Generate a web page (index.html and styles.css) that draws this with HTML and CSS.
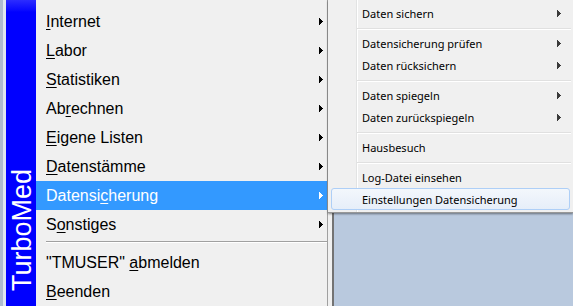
FILE: index.html
```html
<!DOCTYPE html>
<html lang="de">
<head>
<meta charset="utf-8">
<title>TurboMed Menü</title>
<link rel="stylesheet" href="styles.css">
</head>
<body>
<div class="screen">
  <div class="edge"></div>
  <div class="menu">
    <div class="brand"><span class="brand-text">TurboMed</span></div>
    <ul class="items">
      <li class="item"><span><u>I</u>nternet</span><svg class="arrow" viewBox="0 0 4 7"><rect x="0" y="0" width="1" height="7"/><rect x="1" y="1" width="1" height="5"/><rect x="2" y="2" width="1" height="3"/><rect x="3" y="3" width="1" height="1"/></svg></li>
      <li class="item"><span><u>L</u>abor</span><svg class="arrow" viewBox="0 0 4 7"><rect x="0" y="0" width="1" height="7"/><rect x="1" y="1" width="1" height="5"/><rect x="2" y="2" width="1" height="3"/><rect x="3" y="3" width="1" height="1"/></svg></li>
      <li class="item"><span><u>S</u>tatistiken</span><svg class="arrow" viewBox="0 0 4 7"><rect x="0" y="0" width="1" height="7"/><rect x="1" y="1" width="1" height="5"/><rect x="2" y="2" width="1" height="3"/><rect x="3" y="3" width="1" height="1"/></svg></li>
      <li class="item"><span>Ab<u>r</u>echnen</span><svg class="arrow" viewBox="0 0 4 7"><rect x="0" y="0" width="1" height="7"/><rect x="1" y="1" width="1" height="5"/><rect x="2" y="2" width="1" height="3"/><rect x="3" y="3" width="1" height="1"/></svg></li>
      <li class="item"><span><u>E</u>igene Listen</span><svg class="arrow" viewBox="0 0 4 7"><rect x="0" y="0" width="1" height="7"/><rect x="1" y="1" width="1" height="5"/><rect x="2" y="2" width="1" height="3"/><rect x="3" y="3" width="1" height="1"/></svg></li>
      <li class="item"><span><u>D</u>atenstämme</span><svg class="arrow" viewBox="0 0 4 7"><rect x="0" y="0" width="1" height="7"/><rect x="1" y="1" width="1" height="5"/><rect x="2" y="2" width="1" height="3"/><rect x="3" y="3" width="1" height="1"/></svg></li>
      <li class="item active"><span>Datensi<u>c</u>herung</span><svg class="arrow" viewBox="0 0 4 7"><rect x="0" y="0" width="1" height="7"/><rect x="1" y="1" width="1" height="5"/><rect x="2" y="2" width="1" height="3"/><rect x="3" y="3" width="1" height="1"/></svg></li>
      <li class="item"><span>S<u>o</u>nstiges</span><svg class="arrow" viewBox="0 0 4 7"><rect x="0" y="0" width="1" height="7"/><rect x="1" y="1" width="1" height="5"/><rect x="2" y="2" width="1" height="3"/><rect x="3" y="3" width="1" height="1"/></svg></li>
      <li class="sep"></li>
      <li class="item"><span>"TMUSER" <u>a</u>bmelden</span></li>
      <li class="item"><span><u>B</u>eenden</span></li>
    </ul>
  </div>
  <div class="right">
    <ul class="submenu">
      <li class="sitem"><span>Daten sichern</span><svg class="sarrow" viewBox="0 0 4 7"><rect x="0" y="0" width="1" height="7"/><rect x="1" y="1" width="1" height="5"/><rect x="2" y="2" width="1" height="3"/><rect x="3" y="3" width="1" height="1"/></svg></li>
      <li class="ssep"></li>
      <li class="sitem"><span>Datensicherung prüfen</span><svg class="sarrow" viewBox="0 0 4 7"><rect x="0" y="0" width="1" height="7"/><rect x="1" y="1" width="1" height="5"/><rect x="2" y="2" width="1" height="3"/><rect x="3" y="3" width="1" height="1"/></svg></li>
      <li class="sitem"><span>Daten rücksichern</span><svg class="sarrow" viewBox="0 0 4 7"><rect x="0" y="0" width="1" height="7"/><rect x="1" y="1" width="1" height="5"/><rect x="2" y="2" width="1" height="3"/><rect x="3" y="3" width="1" height="1"/></svg></li>
      <li class="ssep"></li>
      <li class="sitem"><span>Daten spiegeln</span><svg class="sarrow" viewBox="0 0 4 7"><rect x="0" y="0" width="1" height="7"/><rect x="1" y="1" width="1" height="5"/><rect x="2" y="2" width="1" height="3"/><rect x="3" y="3" width="1" height="1"/></svg></li>
      <li class="sitem"><span>Daten zurückspiegeln</span><svg class="sarrow" viewBox="0 0 4 7"><rect x="0" y="0" width="1" height="7"/><rect x="1" y="1" width="1" height="5"/><rect x="2" y="2" width="1" height="3"/><rect x="3" y="3" width="1" height="1"/></svg></li>
      <li class="ssep"></li>
      <li class="sitem"><span>Hausbesuch</span></li>
      <li class="ssep"></li>
      <li class="sitem"><span>Log-Datei einsehen</span></li>
      <li class="sitem hover"><span>Einstellungen Datensicherung</span></li>
    </ul>
    <div class="desk-wrap"><div class="desk"></div></div>
  </div>
  <svg class="cursor" width="13" height="20" viewBox="0 0 13 20"><polygon points="0.5,0.5 0.5,16.5 4.5,12.8 7.2,18.8 9.6,17.8 7,11.8 11.8,11.8" fill="#fff" stroke="#000" stroke-width="1" stroke-linejoin="miter"/></svg>
</div>
</body>
</html>
```
FILE: styles.css
```css
* { box-sizing: border-box; }
html, body { margin: 0; padding: 0; }
body { width: 573px; height: 306px; overflow: hidden; background: #f0f0f0; }

.screen {
  position: relative;
  display: flex;
  width: 573px;
  height: 306px;
  overflow: hidden;
}

.edge {
  width: 6px;
  flex: none;
  background: linear-gradient(to right, #aebbd0 0, #aebbd0 3px, #dfe6ef 3px, #dfe6ef 6px);
}

.menu {
  display: flex;
  width: 322px;
  flex: none;
  background: #f0f0f0;
  border-right: 1px solid #a0a0a0;
}

.brand {
  width: 30px;
  flex: none;
  display: flex;
  flex-direction: column;
  justify-content: flex-end;
  padding-bottom: 15px;
  background: linear-gradient(#2c2cff 0, #0a0aff 10px, #0000ff 12px, #0000ff 100%);
  overflow: hidden;
}

.brand-text {
  writing-mode: vertical-rl;
  transform: rotate(180deg);
  font-family: "Liberation Sans", Arial, sans-serif;
  font-size: 27px;
  line-height: 32px;
  width: 32px;
  color: #ffffff;
  white-space: nowrap;
}

.items {
  list-style: none;
  margin: 0;
  padding: 7px 0 0;
  flex: 1;
  font-family: "Liberation Sans", Arial, sans-serif;
  font-size: 16px;
  color: #000;
}

.item {
  display: flex;
  align-items: center;
  justify-content: space-between;
  height: 29px;
  padding: 0 4px 0 10px;
  white-space: nowrap;
}

.item u { text-underline-offset: 2px; }

.item.active { background: #3399ff; color: #fff; }

.arrow { width: 4px; height: 7px; fill: currentColor; margin-top: -1px; }

.sep {
  height: 9px;
  margin-left: 10px;
  padding-top: 2px;
}
.sep::before {
  content: "";
  display: block;
  height: 1px;
  background: #a0a0a0;
  border-bottom: 1px solid #ffffff;
  box-sizing: content-box;
}

.right {
  flex: 1;
  display: flex;
  flex-direction: column;
  background: #f0f0f0;
}

.submenu {
  list-style: none;
  margin: 0;
  padding: 2px 0;
  height: 213px;
  flex: none;
  border-bottom: 1px solid #979797;
  box-shadow: 0 1px 2px rgba(0,0,0,0.45);
  position: relative;
  z-index: 1;
  background:
    linear-gradient(to right, transparent 0, transparent 28px, #e2e3e3 28px, #e2e3e3 29px, #ffffff 29px, #ffffff 30px, transparent 30px),
    #f0f0f0;
  font-family: "Noto Sans", "Open Sans", sans-serif;
  font-size: 11px;
  color: #000;
}

.sitem {
  display: flex;
  align-items: center;
  justify-content: space-between;
  height: 22px;
  margin: 0 3px;
  padding: 0 8px 0 30px;
  border: 1px solid transparent;
  border-radius: 3px;
  white-space: nowrap;
}

.sitem.hover {
  border-color: #aecff7;
  background: linear-gradient(#f3f7fc, #e6eef9);
}

.sarrow { width: 4px; height: 7px; fill: #3a3a3a; }

.ssep {
  height: 8px;
  margin: 0 2px 0 29px;
  padding-top: 4px;
}
.ssep::before {
  content: "";
  display: block;
  height: 1px;
  background: #e0e0e0;
  border-bottom: 1px solid #ffffff;
  box-sizing: content-box;
}

.desk-wrap {
  flex: 1;
  padding-left: 4px;
  background: #f0f0f0;
  display: flex;
}

.desk {
  flex: 1;
  background: #b9c9de;
  border-left: 2px solid #737373;
}

.cursor {
  position: absolute;
  left: 528px;
  top: 192px;
}
```
